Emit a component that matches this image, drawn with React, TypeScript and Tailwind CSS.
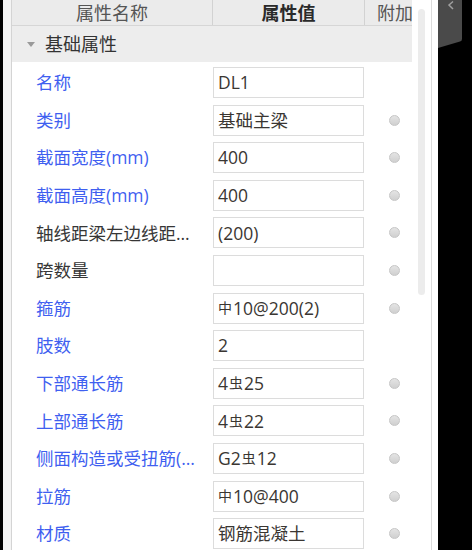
import React from "react";

type Row = {
  label: string;
  blue: boolean;
  value: React.ReactNode;
  extra: boolean;
};

// rebar grade marks, drawn small and raised like the special font does
const HPB = () => <span className="mr-[1px] align-[2px] text-[14px]">中</span>;
const HRB = () => <span className="mx-[1px] align-[2px] text-[14px]">虫</span>;

const rows: Row[] = [
  { label: "名称", blue: true, value: "DL1", extra: false },
  { label: "类别", blue: true, value: "基础主梁", extra: true },
  { label: "截面宽度(mm)", blue: true, value: "400", extra: true },
  { label: "截面高度(mm)", blue: true, value: "400", extra: true },
  { label: "轴线距梁左边线距离(mm)", blue: false, value: "(200)", extra: true },
  { label: "跨数量", blue: false, value: "", extra: true },
  { label: "箍筋", blue: true, value: <><HPB />10@200(2)</>, extra: true },
  { label: "肢数", blue: true, value: "2", extra: false },
  { label: "下部通长筋", blue: true, value: <>4<HRB />25</>, extra: true },
  { label: "上部通长筋", blue: true, value: <>4<HRB />22</>, extra: true },
  { label: "侧面构造或受扭筋(总配筋值)", blue: true, value: <>G2<HRB />12</>, extra: true },
  { label: "拉筋", blue: true, value: <><HPB />10@400</>, extra: true },
  { label: "材质", blue: true, value: "钢筋混凝土", extra: true },
];

function PropRow({ row }: { row: Row }) {
  return (
    <div className="flex h-[37.6px] shrink-0 items-start pt-[5px]">
      <div
        className={`flex h-[31px] w-[201px] shrink-0 items-center pl-[24px] pr-[10px] ${
          row.blue ? "text-[#3f5ff0]" : "text-[#363636]"
        }`}
      >
        <span className="truncate leading-[1.4]">{row.label}</span>
      </div>
      <div className="flex h-[31px] w-[151px] shrink-0 items-center border border-[#dcdcdc] bg-white pl-[4px] text-[#3a3632]">
        <span className="whitespace-nowrap leading-[1.4]">{row.value}</span>
      </div>
      <div className="flex h-[31px] flex-1 items-center pl-[25px]">
        {row.extra && (
          <span className="h-[11px] w-[11px] rounded-full border border-[#c6c6c6] bg-gradient-to-b from-[#e4e4e4] to-[#d0d0d0]" />
        )}
      </div>
    </div>
  );
}

export default function App() {
  return (
    <div className="flex h-[550px] w-[472px] overflow-hidden bg-black font-['Open_Sans','Noto_Sans_CJK_SC',sans-serif] text-[17.5px] leading-none">
      {/* left edge */}
      <div className="w-[3px] shrink-0 bg-black" />
      <div className="w-[9px] shrink-0 border-r border-[#d4d4d4] bg-[#f4f4f4]" />

      {/* property grid */}
      <div className="flex w-[420px] shrink-0 border-r border-[#dcdcdc] bg-white">
        <div className="flex w-[400px] shrink-0 flex-col overflow-hidden">
          {/* header */}
          <div className="flex h-[26px] shrink-0 border-b border-[#d6d6d6] bg-[#ebebeb] text-[18px]">
            <div className="flex w-[201px] shrink-0 items-center justify-center border-r border-[#d2d2d2] text-[#555]">
              属性名称
            </div>
            <div className="flex w-[152px] shrink-0 items-center justify-center border-r border-[#d2d2d2] font-bold text-[#2a2a2a]">
              属性值
            </div>
            <div className="flex flex-1 items-center overflow-hidden whitespace-nowrap pl-[12px] text-[#555]">
              附加
            </div>
          </div>

          {/* group */}
          <div className="flex h-[36px] shrink-0 items-center bg-[#ededed] text-[18px] text-[#333]">
            <svg width="8" height="5" viewBox="0 0 8 5" className="ml-[15px] mr-[10px]">
              <polygon points="0,0 8,0 4,5" fill="#9a9a9a" />
            </svg>
            基础属性
          </div>

          {rows.map((r) => (
            <PropRow key={r.label} row={r} />
          ))}
        </div>

        {/* scrollbar */}
        <div className="w-[19px] shrink-0 pl-[6px] pt-[9px]">
          <div className="h-[286px] w-[7px] rounded-full bg-[#ececec]" />
        </div>
      </div>

      <div className="w-[6px] shrink-0 bg-white" />

      {/* right dark area with collapse tab */}
      <div className="flex-1 bg-black">
        <svg width="24" height="48" viewBox="0 0 24 48">
          <path d="M0 0 H24 V39 Q24 41 22 41.6 L0 48 Z" fill="#4a4a4a" />
          <polyline points="15,1.5 11,5 15,9" fill="none" stroke="#a0a0a0" strokeWidth="1.5" />
        </svg>
      </div>
    </div>
  );
}
